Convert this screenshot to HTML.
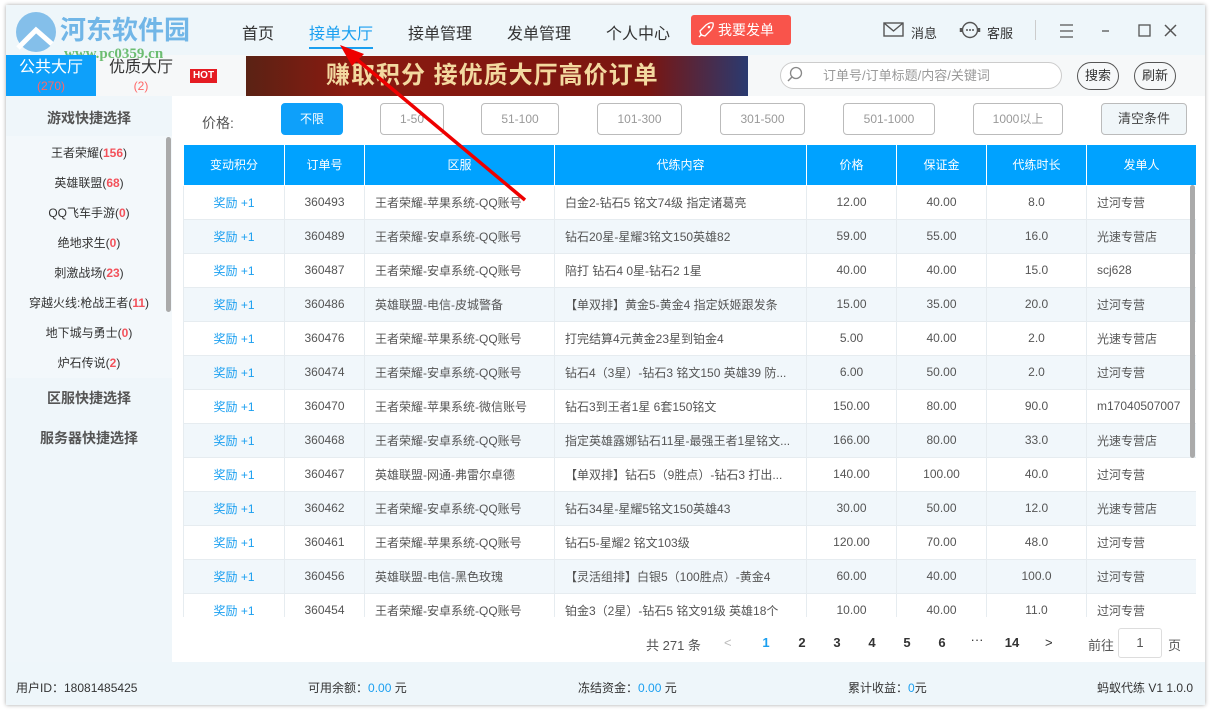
<!DOCTYPE html>
<html><head><meta charset="utf-8"><style>
*{margin:0;padding:0;box-sizing:border-box}
body{width:1212px;height:712px;background:#fff;font-family:"Liberation Sans","Noto Sans CJK SC",sans-serif;position:relative;overflow:hidden;color:#333}
.a{position:absolute}
.win{left:6px;top:5px;width:1199px;height:700px;background:#fff;box-shadow:0 0 4px rgba(0,0,0,.35)}
.nav{font-size:16px;color:#333;top:20px}
table{border-collapse:collapse;font-size:12px;color:#555}
td,th{height:34px;border:1px solid #e6ecf0;white-space:nowrap;overflow:hidden}
th{background:#00a2ff;color:#fff;font-weight:normal;height:40px;border-color:#fff;border-top:none}
tr:nth-child(odd) td{background:#f1f7fb}
td.c{text-align:center}td.l{padding-left:10px}
.pb{top:103px;height:32px;border:1px solid #bbb;border-radius:4px;font-size:12px;color:#999;text-align:center;line-height:30px}
.sb{left:6px;width:166px;text-align:center;font-size:12px;color:#333}
.r{color:#f3525b;font-weight:bold}
.st{font-size:12px;color:#333;top:679px}
.pg{top:635px;font-size:13px;color:#333;font-weight:bold;width:20px;text-align:center}
</style></head><body>
<div class="a win"></div>
<div class="a" style="left:6px;top:5px;width:1199px;height:50px;background:#eef6fa"></div>
<div class="a" style="left:6px;top:55px;width:1199px;height:41px;background:#f6f8f9"></div>
<svg class="a" style="left:8px;top:8px" width="60" height="50"><circle cx="28" cy="24" r="20" fill="#3d9be0" opacity=".6"/><path d="M10 40 L28 22 L44 36" stroke="#fff" stroke-width="5" fill="none"/></svg>
<div class="a" style="left:60px;top:10px;font-size:26px;font-weight:bold;color:#3d9be0;opacity:.7">河东软件园</div>
<div class="a" style="left:64px;top:46px;font-size:15px;font-weight:bold;color:#4caf50;opacity:.8;font-family:'Liberation Serif',serif">www.pc0359.cn</div>
<div class="a nav" style="left:242px">首页</div>
<div class="a nav" style="left:309px;color:#1a9ff0">接单大厅</div>
<div class="a" style="left:309px;top:47px;width:64px;height:2px;background:#1a9ff0"></div>
<div class="a nav" style="left:408px">接单管理</div>
<div class="a nav" style="left:507px">发单管理</div>
<div class="a nav" style="left:606px">个人中心</div>
<div class="a" style="left:691px;top:15px;width:100px;height:30px;background:#f9544b;border-radius:3px;color:#fff;font-size:14px;line-height:30px;padding-left:27px">我要发单</div>
<svg class="a" style="left:697px;top:21px" width="18" height="18"><path d="M4 14 L3 10 L9 4 Q13 1 16 2 Q17 5 14 9 L8 15 Z" fill="none" stroke="#fff" stroke-width="1.3"/><path d="M2 16 L5 13" stroke="#fff" stroke-width="1.3"/><circle cx="12" cy="6" r="1.3" fill="#fff"/></svg>
<svg class="a" style="left:883px;top:22px" width="22" height="16"><rect x="1" y="1" width="19" height="13" fill="none" stroke="#555" stroke-width="1.4"/><path d="M1 1 L10.5 9 L20 1" fill="none" stroke="#555" stroke-width="1.4"/></svg>
<div class="a" style="left:911px;top:23px;font-size:13px;color:#333">消息</div>
<svg class="a" style="left:958px;top:20px" width="24" height="22"><circle cx="12" cy="10" r="7.5" fill="none" stroke="#555" stroke-width="1.4"/><path d="M3 12 V8 M21 12 V8" stroke="#555" stroke-width="2.5"/><circle cx="9" cy="10" r="1" fill="#555"/><circle cx="12" cy="10" r="1" fill="#555"/><circle cx="15" cy="10" r="1" fill="#555"/></svg>
<div class="a" style="left:987px;top:23px;font-size:13px;color:#333">客服</div>
<div class="a" style="left:1035px;top:20px;width:1px;height:20px;background:#ccc"></div>
<svg class="a" style="left:1058px;top:22px" width="120" height="18"><path d="M2 3h13M2 9h13M2 15h13" stroke="#555" stroke-width="1.3"/><path d="M44 9h7" stroke="#555" stroke-width="1.3"/><rect x="81" y="3" width="11" height="11" fill="none" stroke="#555" stroke-width="1.3"/><path d="M118 3l-11 11M107 3l11 11" stroke="#555" stroke-width="1.5"/></svg>
<div class="a" style="left:6px;top:55px;width:90px;height:41px;background:#0ea0fa;color:#fff;text-align:center;font-size:16px;line-height:22px;padding-top:2px">公共大厅<br><span style="font-size:12px;color:#f66;line-height:14px;display:block">(270)</span></div>
<div class="a" style="left:96px;top:57px;width:90px;text-align:center;font-size:16px;color:#333;line-height:22px">优质大厅<br><span style="font-size:12px;color:#f66;line-height:14px;display:block">(2)</span></div>
<div class="a" style="left:190px;top:69px;width:27px;height:14px;background:#e51c23;color:#fff;font-size:10px;font-weight:bold;line-height:14px;text-align:center">HOT</div>
<div class="a" style="left:246px;top:56px;width:502px;height:40px;background:linear-gradient(90deg,#5a2214,#8a1a10 20%,#7a1510 80%,#2a3a70);color:#f3d9a0;font-size:24px;font-weight:bold;line-height:40px;padding-left:80px;letter-spacing:1px">赚取积分 接优质大厅高价订单</div>
<div class="a" style="left:780px;top:62px;width:282px;height:27px;border:1px solid #ccc;border-radius:14px;background:#fff;font-size:13px;color:#999;line-height:25px;padding-left:42px">订单号/订单标题/内容/关键词</div>
<svg class="a" style="left:786px;top:66px" width="18" height="18"><circle cx="10" cy="7" r="5.5" fill="none" stroke="#888" stroke-width="1.3"/><path d="M6 11l-4 4" stroke="#888" stroke-width="1.5"/></svg>
<div class="a" style="left:1077px;top:62px;width:42px;height:28px;border:1px solid #555;border-radius:14px;font-size:13px;text-align:center;line-height:26px;color:#333">搜索</div>
<div class="a" style="left:1134px;top:62px;width:42px;height:28px;border:1px solid #555;border-radius:14px;font-size:13px;text-align:center;line-height:26px;color:#333">刷新</div>
<div class="a" style="left:6px;top:96px;width:166px;height:566px;background:#eff6fa"></div>
<div class="a" style="left:6px;top:136px;width:166px;height:242px;background:#f3f8fb"></div>
<div class="a" style="left:166px;top:137px;width:5px;height:175px;background:#aaa;border-radius:3px"></div>
<div class="a sb" style="top:108px;font-size:14px;color:#555;font-weight:bold">游戏快捷选择</div>
<div class="a sb" style="top:144px">王者荣耀(<span class="r">156</span>)</div>
<div class="a sb" style="top:174px">英雄联盟(<span class="r">68</span>)</div>
<div class="a sb" style="top:204px">QQ飞车手游(<span class="r">0</span>)</div>
<div class="a sb" style="top:234px">绝地求生(<span class="r">0</span>)</div>
<div class="a sb" style="top:264px">刺激战场(<span class="r">23</span>)</div>
<div class="a sb" style="top:294px">穿越火线:枪战王者(<span class="r">11</span>)</div>
<div class="a sb" style="top:324px">地下城与勇士(<span class="r">0</span>)</div>
<div class="a sb" style="top:354px">炉石传说(<span class="r">2</span>)</div>
<div class="a sb" style="top:388px;font-size:14px;color:#555;font-weight:bold">区服快捷选择</div>
<div class="a sb" style="top:428px;font-size:14px;color:#555;font-weight:bold">服务器快捷选择</div>
<div class="a" style="left:202px;top:113px;font-size:14px;color:#555">价格:</div>
<div class="a pb" style="left:281px;width:62px;background:#0ea0fa;border-color:#0ea0fa;color:#fff">不限</div>
<div class="a pb" style="left:380px;width:64px">1-50</div>
<div class="a pb" style="left:481px;width:78px">51-100</div>
<div class="a pb" style="left:597px;width:85px">101-300</div>
<div class="a pb" style="left:720px;width:85px">301-500</div>
<div class="a pb" style="left:843px;width:92px">501-1000</div>
<div class="a pb" style="left:973px;width:90px">1000以上</div>
<div class="a pb" style="left:1101px;width:86px;background:#f0f6f9;color:#444;font-size:13px">清空条件</div>
<div class="a" style="left:183px;top:145px;width:1013px;height:472px;overflow:hidden">
<table style="width:1013px;table-layout:fixed">
<colgroup><col style="width:101px"><col style="width:80px"><col style="width:190px"><col style="width:252px"><col style="width:90px"><col style="width:90px"><col style="width:100px"><col style="width:110px"></colgroup>
<tr><th>变动积分</th><th>订单号</th><th>区服</th><th>代练内容</th><th>价格</th><th>保证金</th><th>代练时长</th><th>发单人</th></tr>
<tr><td class="c" style="color:#1a9ff0">奖励 +1</td><td class="c">360493</td><td class="l">王者荣耀-苹果系统-QQ账号</td><td class="l">白金2-钻石5 铭文74级 指定诸葛亮</td><td class="c">12.00</td><td class="c">40.00</td><td class="c">8.0</td><td class="l">过河专营</td></tr>
<tr><td class="c" style="color:#1a9ff0">奖励 +1</td><td class="c">360489</td><td class="l">王者荣耀-安卓系统-QQ账号</td><td class="l">钻石20星-星耀3铭文150英雄82</td><td class="c">59.00</td><td class="c">55.00</td><td class="c">16.0</td><td class="l">光速专营店</td></tr>
<tr><td class="c" style="color:#1a9ff0">奖励 +1</td><td class="c">360487</td><td class="l">王者荣耀-安卓系统-QQ账号</td><td class="l">陪打 钻石4 0星-钻石2 1星</td><td class="c">40.00</td><td class="c">40.00</td><td class="c">15.0</td><td class="l">scj628</td></tr>
<tr><td class="c" style="color:#1a9ff0">奖励 +1</td><td class="c">360486</td><td class="l">英雄联盟-电信-皮城警备</td><td class="l">【单双排】黄金5-黄金4 指定妖姬跟发条</td><td class="c">15.00</td><td class="c">35.00</td><td class="c">20.0</td><td class="l">过河专营</td></tr>
<tr><td class="c" style="color:#1a9ff0">奖励 +1</td><td class="c">360476</td><td class="l">王者荣耀-苹果系统-QQ账号</td><td class="l">打完结算4元黄金23星到铂金4</td><td class="c">5.00</td><td class="c">40.00</td><td class="c">2.0</td><td class="l">光速专营店</td></tr>
<tr><td class="c" style="color:#1a9ff0">奖励 +1</td><td class="c">360474</td><td class="l">王者荣耀-安卓系统-QQ账号</td><td class="l">钻石4（3星）-钻石3 铭文150 英雄39 防...</td><td class="c">6.00</td><td class="c">50.00</td><td class="c">2.0</td><td class="l">过河专营</td></tr>
<tr><td class="c" style="color:#1a9ff0">奖励 +1</td><td class="c">360470</td><td class="l">王者荣耀-苹果系统-微信账号</td><td class="l">钻石3到王者1星 6套150铭文</td><td class="c">150.00</td><td class="c">80.00</td><td class="c">90.0</td><td class="l">m17040507007</td></tr>
<tr><td class="c" style="color:#1a9ff0">奖励 +1</td><td class="c">360468</td><td class="l">王者荣耀-安卓系统-QQ账号</td><td class="l">指定英雄露娜钻石11星-最强王者1星铭文...</td><td class="c">166.00</td><td class="c">80.00</td><td class="c">33.0</td><td class="l">光速专营店</td></tr>
<tr><td class="c" style="color:#1a9ff0">奖励 +1</td><td class="c">360467</td><td class="l">英雄联盟-网通-弗雷尔卓德</td><td class="l">【单双排】钻石5（9胜点）-钻石3 打出...</td><td class="c">140.00</td><td class="c">100.00</td><td class="c">40.0</td><td class="l">过河专营</td></tr>
<tr><td class="c" style="color:#1a9ff0">奖励 +1</td><td class="c">360462</td><td class="l">王者荣耀-安卓系统-QQ账号</td><td class="l">钻石34星-星耀5铭文150英雄43</td><td class="c">30.00</td><td class="c">50.00</td><td class="c">12.0</td><td class="l">光速专营店</td></tr>
<tr><td class="c" style="color:#1a9ff0">奖励 +1</td><td class="c">360461</td><td class="l">王者荣耀-苹果系统-QQ账号</td><td class="l">钻石5-星耀2 铭文103级</td><td class="c">120.00</td><td class="c">70.00</td><td class="c">48.0</td><td class="l">过河专营</td></tr>
<tr><td class="c" style="color:#1a9ff0">奖励 +1</td><td class="c">360456</td><td class="l">英雄联盟-电信-黑色玫瑰</td><td class="l">【灵活组排】白银5（100胜点）-黄金4</td><td class="c">60.00</td><td class="c">40.00</td><td class="c">100.0</td><td class="l">过河专营</td></tr>
<tr><td class="c" style="color:#1a9ff0">奖励 +1</td><td class="c">360454</td><td class="l">王者荣耀-安卓系统-QQ账号</td><td class="l">铂金3（2星）-钻石5 铭文91级 英雄18个</td><td class="c">10.00</td><td class="c">40.00</td><td class="c">11.0</td><td class="l">过河专营</td></tr>
</table></div>
<div class="a" style="left:1190px;top:185px;width:5px;height:273px;background:#aaa;border-radius:3px"></div>
<svg class="a" style="left:330px;top:40px" width="200" height="165"><path d="M195 160 L18 12" stroke="#e00" stroke-width="3.5"/><path d="M10 5 L34 14 L22 26 Z" fill="#e00"/></svg>
<div class="a" style="top:635px;left:646px;font-size:13px;color:#555">共 271 条</div>
<div class="a" style="top:635px;left:724px;font-size:13px;color:#bbb">&lt;</div>
<div class="a pg" style="left:756px;color:#1a9ff0">1</div>
<div class="a pg" style="left:792px">2</div>
<div class="a pg" style="left:827px">3</div>
<div class="a pg" style="left:862px">4</div>
<div class="a pg" style="left:897px">5</div>
<div class="a pg" style="left:932px">6</div>
<div class="a pg" style="left:967px;font-weight:normal;top:632px">···</div>
<div class="a pg" style="left:1002px">14</div>
<div class="a" style="top:635px;left:1045px;font-size:13px;color:#333">&gt;</div>
<div class="a" style="top:635px;left:1088px;font-size:13px;color:#555">前往</div>
<div class="a" style="top:628px;left:1118px;width:44px;height:30px;border:1px solid #ddd;border-radius:3px;font-size:13px;text-align:center;line-height:28px;color:#555">1</div>
<div class="a" style="top:635px;left:1168px;font-size:13px;color:#555">页</div>
<div class="a" style="left:6px;top:662px;width:1199px;height:43px;background:#eef6fa"></div>
<div class="a st" style="left:16px">用户ID：18081485425</div>
<div class="a st" style="left:308px">可用余额：<span style="color:#1a9ff0">0.00</span> 元</div>
<div class="a st" style="left:578px">冻结资金：<span style="color:#1a9ff0">0.00</span> 元</div>
<div class="a st" style="left:848px">累计收益：<span style="color:#1a9ff0">0</span>元</div>
<div class="a st" style="left:1097px">蚂蚁代练 V1 1.0.0</div>
</body></html>
